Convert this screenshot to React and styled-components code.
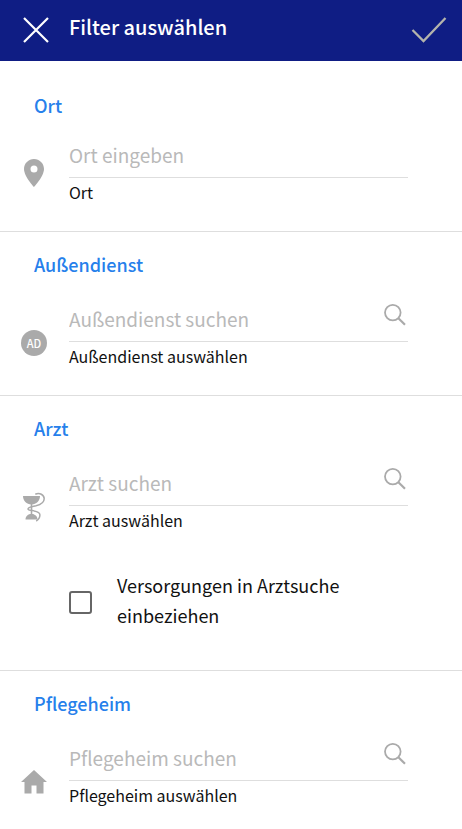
import React, { useState } from "react";
import styled, { createGlobalStyle } from "styled-components";

const GlobalStyle = createGlobalStyle`
  *, *::before, *::after { box-sizing: border-box; }
  body {
    margin: 0;
    background: #fff;
    color: #111;
    font-family: "Noto Sans CJK SC", "Noto Sans", sans-serif;
  }
  button, input { font-family: inherit; }
`;

const Header = styled.header`
  display: flex;
  align-items: center;
  height: 61px;
  padding: 0 15px 2px 22px;
  background: #0f1d84;
  color: #fff;
`;

const IconButton = styled.button`
  display: flex;
  flex: none;
  padding: 0;
  border: 0;
  background: none;
  color: ${(p) => p.$color};
  cursor: pointer;
`;

const SearchButton = styled(IconButton)`
  margin-top: 3px;
`;

const PageTitle = styled.h1`
  flex: 1;
  margin: 0 0 6px 19px;
  font-size: 20px;
  line-height: 30px;
  font-weight: 500;
`;

const Form = styled.form`
  padding-top: 12px;
`;

const Section = styled.section`
  padding: 20px 54px 26px 0;
  border-bottom: 1px solid #dedede;
`;

const SectionTitle = styled.h2`
  margin: 0 0 ${(p) => (p.$compact ? 19 : 24)}px 34px;
  color: #2680eb;
  font-size: 18px;
  line-height: 24px;
  font-weight: 500;
`;

const Row = styled.div`
  display: grid;
  grid-template-columns: 69px 1fr;
`;

const IconSlot = styled.div`
  display: flex;
  justify-content: center;
  align-items: center;
  width: 68px;
  height: 30px;
  margin-top: ${(p) => p.$top}px;
  color: #aaa;
`;

const Field = styled.div`
  min-width: 0;
`;

const InputLine = styled.div`
  display: flex;
  align-items: flex-start;
  height: 42px;
  border-bottom: 1px solid #dedede;
`;

const TextInput = styled.input`
  flex: 1;
  min-width: 0;
  height: 36px;
  padding: 0;
  border: 0;
  outline: 0;
  background: transparent;
  color: #111;
  font-size: 19px;
  &::placeholder { color: #b9b9b9; opacity: 1; }
`;

const Hint = styled.label`
  display: block;
  margin-top: 2px;
  font-size: 16px;
  line-height: 25px;
`;

const CheckLabel = styled.label`
  display: flex;
  align-items: center;
  gap: 25px;
  margin: 37px 0 14px 69px;
  font-size: 18px;
  line-height: 30px;
`;

const Checkbox = styled.input`
  appearance: none;
  flex: none;
  width: 23px;
  height: 23px;
  margin: 4px 0 0;
  border: 2px solid #666;
  border-radius: 3px;
  &:checked { background: #2680eb; }
`;

const Badge = styled.span`
  display: flex;
  justify-content: center;
  align-items: center;
  width: 26px;
  height: 26px;
  border-radius: 50%;
  background: #aaa;
  color: #fff;
  font-size: 11px;
  line-height: 26px;
  font-weight: 500;
`;

const CloseIcon = () => (
  <svg width="28" height="28" viewBox="0 0 28 28" fill="none" stroke="currentColor" strokeWidth="2.2" aria-hidden="true">
    <path d="M2 2 26 26M26 2 2 26" />
  </svg>
);

const CheckIcon = () => (
  <svg width="36" height="28" viewBox="0 0 36 28" fill="none" stroke="currentColor" strokeWidth="2.3" aria-hidden="true">
    <path d="M1.500 14 12.500 25 34.500 2" />
  </svg>
);

const SearchIcon = () => (
  <svg width="24" height="24" viewBox="0 0 24 24" fill="none" stroke="currentColor" strokeWidth="1.8" aria-hidden="true">
    <circle cx="8.8" cy="9.6" r="7.8" />
    <path d="m14.4 15.2 6.600 6.600" strokeWidth="2.2" />
  </svg>
);

const PinIcon = () => (
  <svg width="20" height="28" viewBox="0 0 20 28" aria-hidden="true">
    <path fill="currentColor" fillRule="evenodd" d="M10 0C4.500 0 0 4.400 0 9.900 0 17.200 10 28 10 28s10-10.800 10-18.100C20 4.400 15.500 0 10 0Zm0 13.400a3.500 3.500 0 1 1 0-7 3.500 3.500 0 0 1 0 7Z" />
  </svg>
);

const CupIcon = () => (
  <svg width="22" height="30" viewBox="0 0 22 30" fill="none" stroke="currentColor" aria-hidden="true">
    <path fill="currentColor" stroke="none" d="M0 4h17c0 4.500-3.500 8.500-8.500 8.500S0 8.500 0 4Zm2.500 23.500c0-3.500 2.700-5.500 6-5.500s6 2 6 5.500Z" />
    <path d="M8.500 12v11" strokeWidth="1.600" />
    <path d="M12.300 2.200c4.200-2 8.900.5 8.900 4.600 0 4.500-4.200 6-8.200 7-4 .9-8 1.200-8 3.200 0 2.500 11.700.5 11.900 5.700.1 3-1.500 5-3.700 6.300" strokeWidth="1.500" />
  </svg>
);

const HomeIcon = () => (
  <svg width="26" height="24" viewBox="0 0 26 24" aria-hidden="true">
    <path fill="currentColor" d="M13 0 0 12h3.500v11.500h7V15.500h5v8h7V12H26Z" />
  </svg>
);

function FilterSection({ id, title, placeholder, hint, icon, iconTop, search, children }) {
  return (
    <Section aria-labelledby={`${id}-title`}>
      <SectionTitle id={`${id}-title`} $compact={!search}>{title}</SectionTitle>
      <Row>
        <IconSlot $top={iconTop}>{icon}</IconSlot>
        <Field>
          <InputLine>
            <TextInput id={id} type="text" placeholder={placeholder} />
            {search && (
              <SearchButton type="button" $color="#aaa" aria-label={placeholder}>
                <SearchIcon />
              </SearchButton>
            )}
          </InputLine>
          <Hint htmlFor={id}>{hint}</Hint>
        </Field>
      </Row>
      {children}
    </Section>
  );
}

export default function App() {
  const [included, setIncluded] = useState(false);
  return (
    <>
      <GlobalStyle />
      <Header>
        <IconButton type="button" $color="#fff" aria-label="Schließen"><CloseIcon /></IconButton>
        <PageTitle>Filter auswählen</PageTitle>
        <IconButton type="submit" form="filter" $color="#b4b4ac" aria-label="Übernehmen"><CheckIcon /></IconButton>
      </Header>
      <Form id="filter" onSubmit={(e) => e.preventDefault()}>
        <FilterSection id="ort" title="Ort" placeholder="Ort eingeben" hint="Ort" icon={<PinIcon />} iconTop={22} />
        <FilterSection id="aussendienst" title="Außendienst" placeholder="Außendienst suchen" hint="Außendienst auswählen" icon={<Badge>AD</Badge>} iconTop={28} search />
        <FilterSection id="arzt" title="Arzt" placeholder="Arzt suchen" hint="Arzt auswählen" icon={<CupIcon />} iconTop={28} search>
          <CheckLabel>
            <Checkbox type="checkbox" checked={included} onChange={(e) => setIncluded(e.target.checked)} />
            <span>Versorgungen in Arztsuche einbeziehen</span>
          </CheckLabel>
        </FilterSection>
        <FilterSection id="pflegeheim" title="Pflegeheim" placeholder="Pflegeheim suchen" hint="Pflegeheim auswählen" icon={<HomeIcon />} iconTop={28} search />
      </Form>
    </>
  );
}
